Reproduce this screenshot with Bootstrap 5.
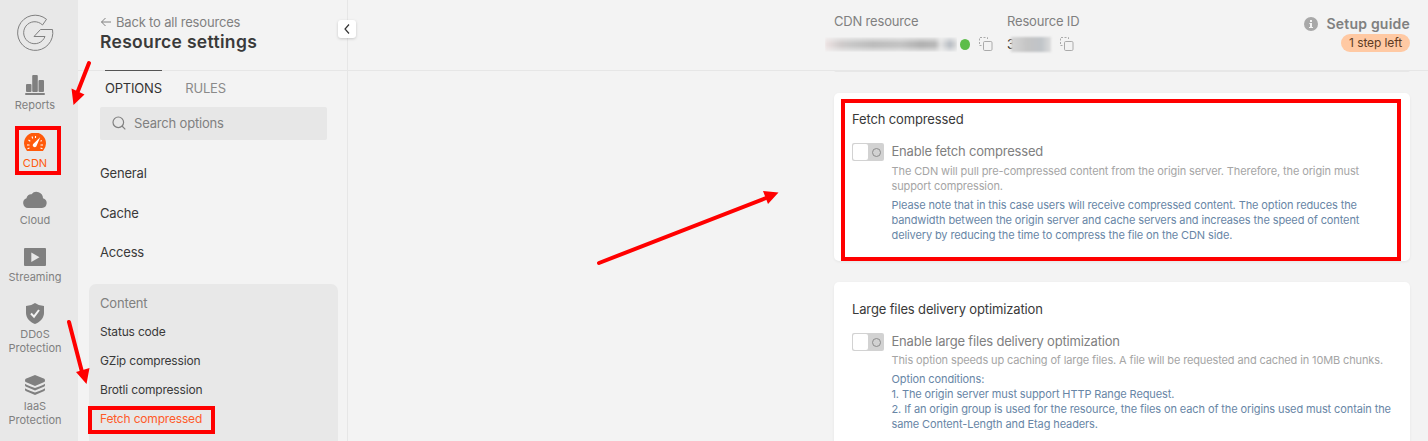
<!DOCTYPE html>
<html lang="en">
<head>
<meta charset="utf-8">
<meta name="viewport" content="width=device-width, initial-scale=1">
<title>Resource settings</title>
<link href="https://cdn.jsdelivr.net/npm/bootstrap@5.3.0/dist/css/bootstrap.min.css" rel="stylesheet">
<style>
  body { font-family: Inter, "Liberation Sans", sans-serif; font-size: 13px; line-height: 16px; letter-spacing: -.18px; background: #f3f3f3; color: #393939; }
  a { color: inherit; text-decoration: none; }
  svg { display: block; flex: none; }
  .app { height: 441px; }
  .rail { width: 78px; background: #e8e8e8; color: #808080; font-size: 11px; line-height: 14px; letter-spacing: 0; padding-top: 14px; }
  .rail-logo { height: 60px; width: 70px; flex: none; }
  .rail-item { width: 70px; flex: none; gap: 2.4px; margin-bottom: 18.85px; }
  .rail-item .pic { height: 22px; }
  .rail-item.current { color: #ff5a0a; }
  .side { width: 270px; border-right: 1px solid #e6e6e6; }
  .topbar { height: 71px; border-bottom: 1px solid #e6e6e6; }
  .side .topbar { padding: 14px 0 0 22px; }
  .back { color: #808080; }
  .page-title { font-size: 17.5px; line-height: 22px; margin-top: 1px; font-weight: 600; letter-spacing: .32px; color: #3a3a3a; }
  .tabs { padding-left: 27px; gap: 23.5px; margin-top: -1px; letter-spacing: -.2px; }
  .tabs a { padding-top: 8px; border-top: 2px solid transparent; color: #8a8a8a; height: 37px; }
  .tabs a.current { border-color: #555; border-top-width: 1px; padding-top: 9px; color: #333; }
  .search { margin: 0 20px 0 22px; height: 33px; background: #e7e7e7; border-radius: 2px; padding: 0 0 1px 12px; gap: 8px; color: #808080; }
  .groups { padding: 25px 0 0 22px; }
  .groups a { display: block; height: 39.5px; line-height: 16px; }
  .subgroup { margin: 0 9px 0 11px; padding: 11px; background: #e8e8e8; border-radius: 7px; height: 200px; font-size: 12px; }
  .subgroup a { display: block; height: 29px; line-height: 16px; }
  .subgroup .head { font-size: 13px; color: #808080; height: 29px; }
  .subgroup .current { color: #ff5a28; }
  .collapse-btn { left: 338px; top: 20px; width: 18px; height: 18px; background: #fff; border-radius: 3px; box-shadow: 0 1px 3px rgba(0,0,0,.18); }
  .main-head { padding: 13px 18px 0 486px; color: #808080; }
  .head-row { height: 16px; margin-top: 7px; }
  .col-name { width: 173px; }
  .masked { height: 15px; filter: blur(1px); flex: none; }
  .masked-name { width: 132px; margin: 0 3px 0 -9px; background: linear-gradient(90deg, #eee4e4 0, #d0cccc 16px, #c8c8c8 26px, #bdbdbd 48px, #c4c4c4 76px, #b2b2b2 96px, #b9b9b9 110px, #e4e4e4 116px, #b9bec4 125px, #ddd 132px); -webkit-mask: linear-gradient(rgba(0,0,0,.2), #000 40%, #000 60%, rgba(0,0,0,.2)); mask: linear-gradient(rgba(0,0,0,.2), #000 40%, #000 60%, rgba(0,0,0,.2)); }
  .masked-id { width: 40px; margin: 0 9px 0 -4px; background: linear-gradient(90deg, #d6d6d6, #c5c5c5 40%, #c0c4c8 75%, #ddd); }
  .idnum { color: #222; }
  .dot { width: 10px; height: 11px; margin-right: 9px; border-radius: 50%; background: #5dbd4a; }
  .guide { height: 20px; font-size: 14px; font-weight: 600; letter-spacing: .22px; margin-top: 1px; }
  .steps { background: #ffc9a3; color: #5e3b24; font-size: 12px; line-height: 18px; padding: 0 8px; border-radius: 9px; letter-spacing: -.1px; }
  .content { padding: 0 18px 0 486px; }
  .panel { background: #fff; border-radius: 5px; padding: 18px; box-shadow: 0 1px 3px rgba(0,0,0,.06); }
  .panel-edge { height: 2px; background: #e7e7e7; border-radius: 0 0 5px 5px; margin-top: -1px; margin-bottom: 21px; }
  .panel-fetch { height: 168px; }
  .panel-large { height: 200px; margin-top: 21px; padding-top: 19px; }
  .panel-title { margin-bottom: 16px; letter-spacing: -.14px; }
  .switch { width: 32px; height: 18px; border-radius: 2px; background: #d2d2d2; padding: 1px 3px 1px 1px; margin-right: 7.500px; flex: none; }
  .switch i { width: 15px; height: 16px; border-radius: 2px; background: #fff; }
  .switch b { width: 9px; height: 9px; border: 1px solid #8c8c8c; border-radius: 50%; }
  .opt-label { color: #808080; line-height: 17px; letter-spacing: -.2px; }
  .desc, .note { font-size: 11px; line-height: 15px; letter-spacing: -.11px; white-space: nowrap; }
  .desc { color: #a5a5a5; padding-top: 4px; }
  .panel-large .desc { padding-top: 3px; letter-spacing: -.125px; }
  .note { color: #6886a6; margin-top: 4px; }
  .marks { left: 0; top: 0; pointer-events: none; z-index: 5; }
</style>
</head>
<body class="overflow-hidden">
<div class="app d-flex position-relative overflow-hidden">
  <nav class="rail d-flex flex-column flex-shrink-0">
    <a href="#" class="rail-logo d-flex justify-content-center">
      <svg width="38" height="38" viewBox="0 0 38 38" fill="none" stroke="#808080" stroke-width="1"><path d="M30.500 5.300A17.600 17.600 0 1 0 36.500 15.500H24.500L18 22.500H29A11 11 0 1 1 26.500 11Z" /></svg>
    </a>
    <a href="#" class="rail-item d-flex flex-column align-items-center text-center">
      <span class="pic d-flex align-items-center"><svg width="20" height="20" viewBox="0 0 20 20" fill="#808080"><rect x="1" y="9" width="5.500" height="8" rx="1"/><rect x="7.200" y="0" width="5.600" height="17" rx="1"/><rect x="13.500" y="5" width="5.500" height="12" rx="1"/><rect y="18" width="20" height="2" rx="1"/></svg></span>Reports
    </a>
    <a href="#" class="rail-item current d-flex flex-column align-items-center text-center">
      <span class="pic d-flex align-items-center"><svg width="22" height="18" viewBox="0 0 22 18"><path d="M3 18A11 11 0 1 1 19 18Z" fill="#ff5a0a"/><path d="M3 12H5.500M4.500 7 6.300 8.200M8 3.500 8.700 5.500M11.500 3V5M19 12H16.500M17.800 7.500 16.500 8.200M3.500 15.700 5.500 15M18.500 15.700 16.500 15" stroke="#fff" stroke-width="1.100"/><path d="M16.200 4.200 12.700 12.600A2 2 0 1 1 9.700 10.500Z" fill="#fff"/></svg></span>CDN
    </a>
    <a href="#" class="rail-item d-flex flex-column align-items-center text-center">
      <span class="pic d-flex align-items-center"><svg width="24" height="17" viewBox="0 0 24 17" fill="#808080"><path d="M5 17A5 5 0 0 1 3.500 7.300 4.500 4.500 0 0 1 8.500 3.200 6.500 6.500 0 0 1 20 7.200 5 5 0 0 1 19 17Z"/></svg></span>Cloud
    </a>
    <a href="#" class="rail-item d-flex flex-column align-items-center text-center">
      <span class="pic d-flex align-items-center"><svg width="22" height="18" viewBox="0 0 22 18"><rect width="22" height="18" rx="1" fill="#808080"/><path d="M7.300 4.500V14L15.500 9.200Z" fill="#e8e8e8"/></svg></span>Streaming
    </a>
    <a href="#" class="rail-item d-flex flex-column align-items-center text-center">
      <span class="pic d-flex align-items-center"><svg width="18" height="21" viewBox="0 0 18 21"><path d="M9 0Q13 3 18 3V10C18 15 14 19 9 21 4 19 0 15 0 10V3Q5 3 9 0Z" fill="#808080"/><path d="M5 10.500 8 13.700 13 7" fill="none" stroke="#f3f3f3" stroke-width="2"/></svg></span>DDoS<br>Protection
    </a>
    <a href="#" class="rail-item d-flex flex-column align-items-center text-center">
      <span class="pic d-flex align-items-center"><svg width="20" height="20" viewBox="0 0 20 20" fill="#808080"><path d="M10 0 19.300 3.800Q20 4.300 20 5.500T19.300 7L10 11 .7 7Q0 6.700 0 5.500T.7 3.800Z"/><path d="M0 8.800Q.3 9.500 10 13 19.700 9.500 20 8.800 20.200 11 19.300 11.500L10 15.500 .7 11.500Q-.2 11 0 8.800Z"/><path d="M0 13.300Q.3 14 10 17.500 19.700 14 20 13.300 20.200 15.500 19.300 16L10 20 .7 16Q-.2 15.500 0 13.300Z"/></svg></span>IaaS<br>Protection
    </a>
  </nav>

  <aside class="side flex-shrink-0">
    <div class="topbar">
      <a href="#" class="back d-flex align-items-center"><svg class="me-1" width="12" height="10" viewBox="0 0 12 10" fill="none" stroke="#808080"><path d="M11 5H1.500M5.500 1 1.500 5 5.500 9"/></svg>Back to all resources</a>
      <h1 class="page-title mb-0">Resource settings</h1>
    </div>
    <div class="tabs d-flex"><a href="#" class="current">OPTIONS</a><a href="#">RULES</a></div>
    <div class="search d-flex align-items-center"><svg width="14" height="14" viewBox="0 0 14 14" fill="none" stroke="#808080" stroke-width="1.200"><circle cx="6.300" cy="6.300" r="5.300"/><path d="M10 10 13.300 13.300"/></svg>Search options</div>
    <div class="groups"><a href="#">General</a><a href="#">Cache</a><a href="#">Access</a></div>
    <div class="subgroup">
      <a href="#" class="head">Content</a>
      <a href="#">Status code</a><a href="#">GZip compression</a><a href="#">Brotli compression</a><a href="#" class="current">Fetch compressed</a>
    </div>
  </aside>

  <main class="flex-grow-1">
    <header class="topbar main-head d-flex">
      <div class="col-name">
        <div>CDN resource</div>
        <div class="head-row d-flex align-items-center"><span class="masked masked-name"></span><span class="dot"></span>
          <svg width="14" height="14" viewBox="0 0 14 14" fill="none" stroke="#aaa"><path d="M2.500 8.500H.5V.5H8.500V2.500" stroke-dasharray="2 1.500"/><rect x="4.500" y="4.500" width="8.500" height="9" rx="1.200"/></svg></div>
      </div>
      <div>
        <div>Resource ID</div>
        <div class="head-row d-flex align-items-center"><span class="idnum">3</span><span class="masked masked-id"></span>
          <svg width="14" height="14" viewBox="0 0 14 14" fill="none" stroke="#aaa"><path d="M2.500 8.500H.5V.5H8.500V2.500" stroke-dasharray="2 1.500"/><rect x="4.500" y="4.500" width="8.500" height="9" rx="1.200"/></svg></div>
      </div>
      <div class="ms-auto d-flex flex-column align-items-end">
        <div class="guide d-flex align-items-center gap-2"><svg width="14" height="14" viewBox="0 0 14 14"><circle cx="7" cy="7" r="7" fill="#a8a8a8"/><path d="M6 3H8V5H6ZM5.300 6H8V10H9V11H5V10H6V7H5.300Z" fill="#f3f3f3"/></svg>Setup guide</div>
        <span class="steps">1 step left</span>
      </div>
    </header>
    <div class="content">
      <div class="panel-edge"></div>
      <section class="panel panel-fetch">
        <div class="panel-title">Fetch compressed</div>
        <div class="d-flex">
          <span class="switch d-flex align-items-center justify-content-between"><i></i><b></b></span>
          <div>
            <div class="opt-label">Enable fetch compressed</div>
            <div class="desc">The CDN will pull pre-compressed content from the origin server. Therefore, the origin must<br>support compression.</div>
            <div class="note">Please note that in this case users will receive compressed content. The option reduces the<br>bandwidth between the origin server and cache servers and increases the speed of content<br>delivery by reducing the time to compress the file on the CDN side.</div>
          </div>
        </div>
      </section>
      <section class="panel panel-large">
        <div class="panel-title">Large files delivery optimization</div>
        <div class="d-flex">
          <span class="switch d-flex align-items-center justify-content-between"><i></i><b></b></span>
          <div>
            <div class="opt-label">Enable large files delivery optimization</div>
            <div class="desc">This option speeds up caching of large files. A file will be requested and cached in 10MB chunks.</div>
            <div class="note">Option conditions:<br>1. The origin server must support HTTP Range Request.<br>2. If an origin group is used for the resource, the files on each of the origins used must contain the<br>same Content-Length and Etag headers.</div>
          </div>
        </div>
      </section>
    </div>
  </main>

  <a href="#" class="collapse-btn position-absolute d-flex align-items-center justify-content-center"><svg width="6" height="10" viewBox="0 0 6 10" fill="none" stroke="#333" stroke-width="1.200"><path d="M5 .5 1 5 5 9.500"/></svg></a>

  <!-- Tutorial callouts drawn over the interface -->
  <svg class="marks position-absolute" width="1428" height="441" viewBox="0 0 1428 441" fill="none" stroke="#f00" stroke-width="4" stroke-linecap="round">
    <rect x="17" y="128" width="42" height="45"/>
    <rect x="90" y="408" width="123" height="24"/>
    <rect x="843" y="101" width="556" height="158"/>
    <path d="M89 63 78 91M69 322 82 372M599 263 766 198"/>
    <path d="M71.500 88.500 84.500 94.500 73.500 105ZM76 372 89.500 368 86.500 384ZM763 191 778.500 192.500 768 204Z" fill="#f00" stroke="none"/>
  </svg>
</div>
<script src="https://cdn.jsdelivr.net/npm/bootstrap@5.3.0/dist/js/bootstrap.bundle.min.js"></script>
</body>
</html>
